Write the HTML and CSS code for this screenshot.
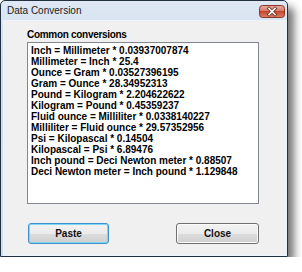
FILE: index.html
```html
<!DOCTYPE html>
<html>
  <head>
    <meta charset="utf-8" />
    <title>Data Conversion</title>
    <link rel="stylesheet" href="styles.css">
  </head>
  <body>
    <div class="window">
      <div class="titlebar">
        <span class="title">Data Conversion</span>
        <div class="close-btn">
          <svg width="26" height="13" viewBox="0 0 26 13">
            <defs>
              <linearGradient id="red" x1="0" y1="0" x2="0" y2="1">
                <stop offset="0" stop-color="#eab0a2" />
                <stop offset="0.45" stop-color="#d87a66" />
                <stop offset="0.5" stop-color="#c8462e" />
                <stop offset="1" stop-color="#dc8066" />
              </linearGradient>
            </defs>
            <rect x="0.5" y="0.5" width="25" height="12" rx="3" fill="url(#red)" stroke="#8a3526" />
            <path d="M10 3.5 L16 9.5 M16 3.5 L10 9.5" stroke="#6b3228" stroke-width="3.2" stroke-linecap="square" />
            <path d="M10 3.5 L16 9.5 M16 3.5 L10 9.5" stroke="#ffffff" stroke-width="1.6" stroke-linecap="square" />
          </svg>
        </div>
      </div>
      <div class="client">
        <div class="group-label">Common conversions</div>
        <div class="listbox">
          <div class="item">Inch = Millimeter * 0.03937007874</div>
          <div class="item">Millimeter = Inch * 25.4</div>
          <div class="item">Ounce = Gram * 0.03527396195</div>
          <div class="item">Gram = Ounce * 28.34952313</div>
          <div class="item">Pound = Kilogram * 2.204622622</div>
          <div class="item">Kilogram = Pound * 0.45359237</div>
          <div class="item">Fluid ounce = Milliliter * 0.0338140227</div>
          <div class="item">Milliliter = Fluid ounce * 29.57352956</div>
          <div class="item">Psi = Kilopascal * 0.14504</div>
          <div class="item">Kilopascal = Psi * 6.89476</div>
          <div class="item">Inch pound = Deci Newton meter * 0.88507</div>
          <div class="item">Deci Newton meter = Inch pound * 1.129848</div>
        </div>
        <div class="buttons">
          <button class="btn btn-default">Paste</button>
          <button class="btn btn-close">Close</button>
        </div>
      </div>
    </div>
  </body>
</html>
```

FILE: styles.css
```css
body {
  margin: 0;
  background: #ffffff;
  font-family: "Liberation Sans", Arial, sans-serif;
}
.window {
  width: 288px;
  height: 257px;
  box-sizing: border-box;
  border: 1px solid #22313f;
  border-radius: 5px 5px 0 0;
  background: linear-gradient(#dfe8f4, #cddcee 60px, #cfdef0);
  box-shadow: 6px 7px 8px rgba(0, 0, 0, 0.55);
  display: flex;
  flex-direction: column;
}
.titlebar {
  height: 19px;
  display: flex;
  align-items: center;
  justify-content: space-between;
  padding: 0 2px 0 6px;
}
.title {
  font-size: 10px;
  color: #1a1a1a;
}
.close-btn {
  width: 26px;
  height: 13px;
  margin-top: 1px;
}
.close-btn svg {
  display: block;
}
.client {
  flex: 1;
  margin: 1px 1px 1px 3px;
  background: #f0f0f0;
  box-shadow: 0 0 0 1px #eef4fb;
  padding: 8px 27px 0 23px;
}
.group-label {
  font-size: 10px;
  font-weight: bold;
  line-height: 12px;
  color: #000;
  margin-bottom: 1px;
  letter-spacing: -0.3px;
}
.listbox {
  height: 162px;
  box-sizing: border-box;
  border: 1px solid #828790;
  background: #ffffff;
  padding: 2px 3px;
}
.item {
  font-size: 10px;
  font-weight: bold;
  line-height: 11px;
  color: #000;
  white-space: nowrap;
}
.buttons {
  display: flex;
  justify-content: space-between;
  margin-top: 19px;
  padding-left: 1px;
}
.btn {
  height: 21px;
  box-sizing: border-box;
  border-radius: 3px;
  font-family: "Liberation Sans", Arial, sans-serif;
  font-size: 10px;
  font-weight: bold;
  color: #111;
  background: linear-gradient(#f2f2f2, #ebebeb 50%, #dddddd 51%, #cfcfcf);
  padding: 0;
}
.btn-default {
  width: 81px;
  border: 1px solid #3c8fc8;
  box-shadow: inset 0 0 0 1px #7fd6f7;
}
.btn-close {
  width: 83px;
  border: 1px solid #707070;
  box-shadow: inset 0 0 0 1px #fbfbfb;
}
```
